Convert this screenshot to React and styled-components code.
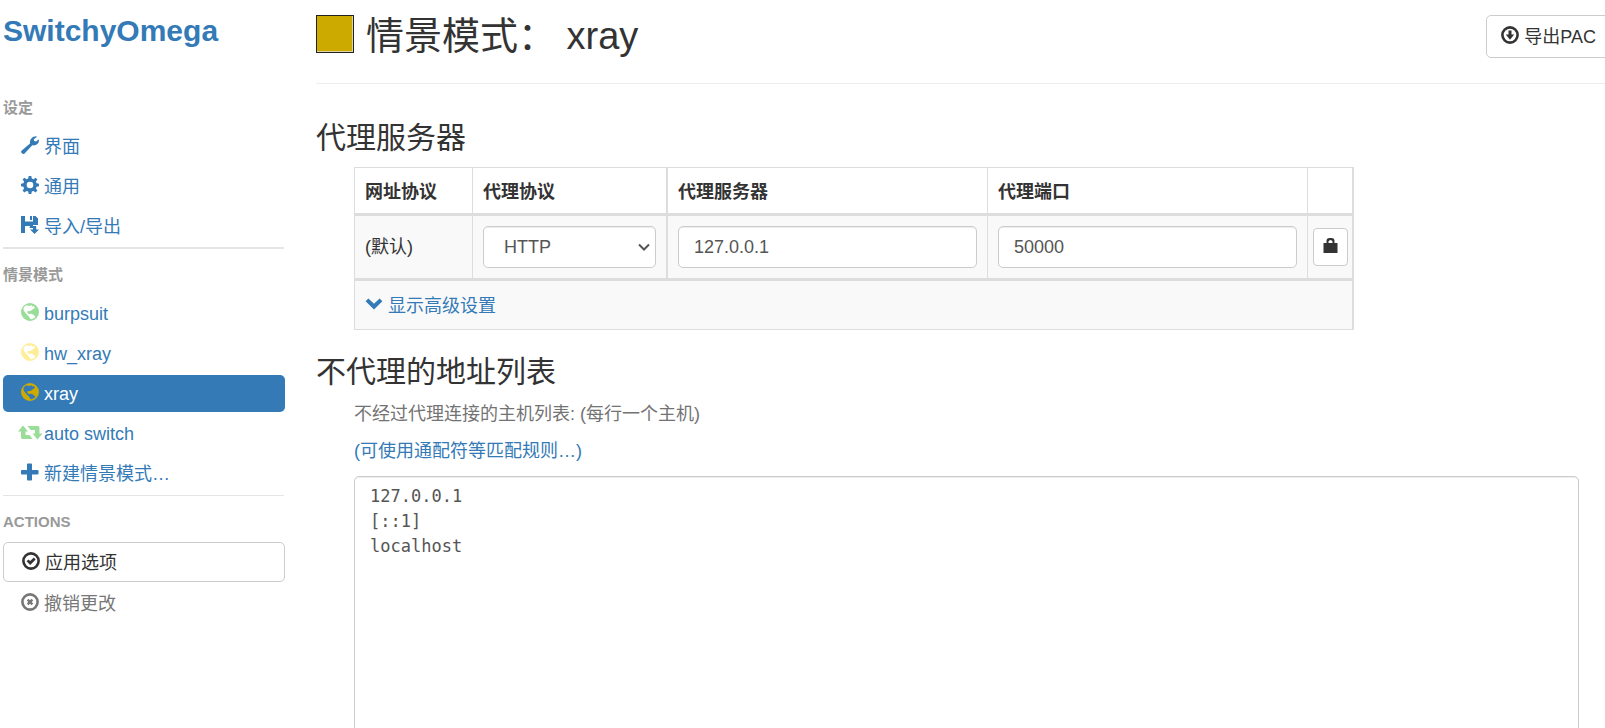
import React from "react";
import styled, { createGlobalStyle, css } from "styled-components";

const GlobalStyle = createGlobalStyle`
  *, *::before, *::after { box-sizing: border-box; }
  body {
    margin: 0;
    background: #fff;
    color: #333;
    font: 18px/25px "Liberation Sans", Arial, "Noto Sans CJK SC", sans-serif;
  }
  h1, h2, h3, p, ul { margin: 0; padding: 0; font-weight: 400; }
  ul { list-style: none; }
  a { color: #337ab7; text-decoration: none; }
  button, input, select, textarea { font: inherit; margin: 0; }
`;

const Shell = styled.div`
  display: grid;
  grid-template-columns: 282px minmax(0, 1fr);
  column-gap: 31px;
  height: 100vh;
  padding-left: 3px;
  overflow: hidden;
`;

const Sidebar = styled.nav`
  padding-top: 14px;
`;

const Brand = styled.h1`
  margin-bottom: 50px;
  font-size: 30px;
  line-height: 34px;
  a { font-weight: 700; }
`;

const NavHeading = styled.h3`
  margin-bottom: 10px;
  color: #999;
  font-size: 15px;
  font-weight: 700;
  line-height: 20px;
  text-transform: uppercase;
`;

const NavList = styled.ul`
  display: flex;
  flex-direction: column;
  gap: 3px;
`;

const navItem = css`
  display: flex;
  align-items: center;
  gap: 5px;
  width: 100%;
  padding: 7px 18px 5px;
  border-radius: 5px;
  line-height: 25px;
`;

const NavLink = styled.a`
  ${navItem}
  ${(p) => p.$active && css`background: #337ab7; color: #fff;`}
  ${(p) => p.$muted && css`color: #777;`}
`;

const ApplyButton = styled.button`
  ${navItem}
  border: 1px solid #ccc;
  background: #fff;
  color: #333;
  height: 40px;
`;

const Divider = styled.hr`
  margin: ${(p) => (p.$heavy ? 2 : 3)}px 1px 16px 0;
  border: 0;
  border-top: ${(p) => (p.$heavy ? 2 : 1)}px solid #e5e5e5;
`;

const Svg = styled.svg`
  flex: none;
  display: block;
  width: 18px;
  height: 18px;
  margin-bottom: 5px;
  overflow: visible;
  fill: ${(p) => p.$color || "currentColor"};
`;

const Main = styled.main`
  margin-right: -6px;
`;

const Header = styled.header`
  display: flex;
  align-items: flex-start;
  justify-content: space-between;
  height: 84px;
  padding-top: 15px;
  border-bottom: 1px solid #eee;
`;

const Title = styled.div`
  display: flex;
  align-items: flex-start;
  gap: 12px;
  h2 { font-size: 38px; line-height: 42px; white-space: pre; }
`;

const Swatch = styled.button`
  width: 38px;
  height: 38px;
  padding: 0;
  border: 1px solid #222;
  background: #ca0;
  box-shadow: inset -1px -1px #e0d4a0;
`;

const ExportButton = styled.button`
  display: flex;
  align-items: center;
  gap: 5px;
  height: 43px;
  padding: 2px 14px 0;
  border: 1px solid #ccc;
  border-radius: 5px;
  background: #fff;
  color: #333;
`;

const Section = styled.section`
  margin-top: ${(p) => (p.$first ? 37 : 25)}px;
`;

const SectionTitle = styled.h2`
  margin-bottom: 12px;
  font-size: 30px;
  line-height: 34px;
`;

const SectionBody = styled.div`
  padding: 0 32px 0 38px;
`;

const Table = styled.table`
  width: 100%;
  max-width: 1000px;
  table-layout: fixed;
  border: 1px solid #ddd;
  border-right-width: 2px;
  border-collapse: separate;
  border-spacing: 0;
  th, td {
    height: 48px;
    padding: 0 10px;
    border-right: 1px solid #ddd;
    text-align: left;
    vertical-align: middle;
  }
  th:nth-child(2), td:nth-child(2) { border-right-width: 2px; }
  th:last-child, td:last-child { border-right: 0; }
  th, tbody td { border-bottom: 3px solid #ddd; }
  th { padding-top: 3px; }
  tbody td { height: 65px; background: #f9f9f9; }
  tbody td:last-child { padding: 0 4px 0 5px; }
  tfoot td { padding-top: 2px; background: #f9f9f9; }
`;

const Col = styled.col`
  width: ${(p) => (p.$w ? `${p.$w}px` : "auto")};
`;

const field = css`
  display: block;
  width: 100%;
  border: 1px solid #ccc;
  border-radius: 5px;
  outline: 0;
  background: #fff;
  color: #555;
  box-shadow: inset 0 1px 1px rgba(0, 0, 0, 0.075);
`;

const TextInput = styled.input`
  ${field}
  height: 42px;
  padding: 0 15px;
`;

const SelectWrap = styled.div`
  display: grid;
  align-items: center;
  > * { grid-area: 1 / 1; }
  svg {
    justify-self: end;
    width: 12px;
    height: 8px;
    margin: 0 6px 0 0;
    fill: none;
    stroke: #555;
    stroke-width: 2;
    pointer-events: none;
  }
`;

const Select = styled.select`
  ${field}
  height: 42px;
  padding: 0 20px;
  appearance: none;
`;

const LockButton = styled.button`
  display: flex;
  align-items: center;
  justify-content: center;
  width: 35px;
  height: 38px;
  padding: 0;
  border: 1px solid #ccc;
  border-radius: 4px;
  background: #fff;
  color: #333;
`;

const AdvancedLink = styled.a`
  display: flex;
  align-items: center;
  gap: 5px;
`;

const Help = styled.p`
  margin-bottom: 12px;
  color: #737373;
`;

const Hints = styled.div`
  padding-top: 1px;
`;

const BypassList = styled.textarea`
  ${field}
  margin-top: 12px;
  padding: 7px 15px;
  font-family: "DejaVu Sans Mono", "Liberation Mono", monospace;
  font-size: 17px;
  line-height: 25px;
  resize: none;
`;

const Icon = ({ color, box = "0 0 18 18", children }) => (
  <Svg viewBox={box} $color={color} aria-hidden="true">{children}</Svg>
);

const WrenchIcon = () => (
  <Icon>
    <path d="M.5 14.800 9 7.500C8.500 3.500 11 .2 15.500.2L15.800 1 12.800 3.200 13.200 5 15 5.600 17.600 3.400 18 4C18 8 15 9.800 11.300 9.300L3.600 17.400C2 19-.9 16.400.5 14.800Z" />
  </Icon>
);

const CogIcon = () => (
  <Icon>
    <path
      fillRule="evenodd"
      d="M7.700 0h2.600l.5 2.500 1.700.7 2.100-1.500 1.800 1.800-1.500 2.100.7 1.700 2.400.4v2.600l-2.400.5-.7 1.700 1.500 2.100-1.800 1.800-2.100-1.500-1.700.7-.5 2.400H7.700l-.5-2.400-1.700-.7-2.100 1.500-1.800-1.800 1.500-2.100-.7-1.700L0 10.300V7.700l2.400-.4.7-1.700-1.500-2.100 1.800-1.800 2.100 1.500 1.700-.7ZM9 5.700a3.300 3.300 0 1 0 0 6.600 3.300 3.300 0 0 0 0-6.600Z"
    />
  </Icon>
);

const SaveIcon = () => (
  <Icon>
    <path d="M0 0h4v5.500h8V0h2.500L17 2.500V9h-5v3H8.500l.5-2H4v7H0ZM9 0h2v4H9ZM12 10h3.200v3.500H18L13.600 18 9 13.500h3Z" />
  </Icon>
);

const GlobeIcon = ({ color }) => (
  <Icon color={color}>
    <path
      fillRule="evenodd"
      d="M9 0a9 9 0 1 1 0 18A9 9 0 0 1 9 0ZM5.500 2.200 8 3 10.500 2.200 11.500 3.500 12.800 3 14 5 12 6 10.300 7.500 8.200 8.300 6.500 8 6.200 9.800 8 11 10.800 10.800 13 12.300 14.600 14 11.500 16 9.500 16.200 8.300 14 6.300 12 4.500 10 3 8 2.300 5.800 3.500 3.600Z"
    />
  </Icon>
);

const RetweetIcon = ({ color }) => (
  <Icon color={color}>
    <path d="M2 2.500 7 8.500H4.500V12H8.500L11.500 16H1.500Q0 16 0 14.500V8.500h-3ZM6.500 3H17Q18.500 3 18.500 4.500V10.500H21.500L16.500 16.500 11.500 10.500H14V7H9.800Z" />
  </Icon>
);

const PlusIcon = () => (
  <Icon>
    <path d="M6.800.5h3.400q.8 0 .8.8V7h5.700q.8 0 .8.8v2.900q0 .8-.8.8H11v5.200q0 .8-.8.8H6.800q-.8 0-.8-.8v-5.200H.8q-.8 0-.8-.8V7.800Q0 7 .8 7H6V1.300q0-.8.8-.8Z" />
  </Icon>
);

const Ring = ({ children }) => (
  <Icon>
    <circle cx="9" cy="9" r="7.600" fill="none" stroke="currentColor" strokeWidth="2.600" />
    {children}
  </Icon>
);

const OkIcon = () => (
  <Ring>
    <path d="m4.600 9.300 1.900-1.900 1.700 1.700 3.600-3.600 1.900 1.900-5.500 5.500Z" />
  </Ring>
);

const RemoveIcon = () => (
  <Ring>
    <path d="m7.400 5.800 1.600 1.500 1.600-1.500 1.600 1.600L10.700 9l1.500 1.600-1.600 1.600L9 10.700l-1.600 1.500-1.600-1.600L7.300 9 5.800 7.400Z" />
  </Ring>
);

const DownloadIcon = () => (
  <Ring>
    <path d="M7.500 4.500h3v4h2.700L9 13.800 4.800 8.500h2.700Z" />
  </Ring>
);

const LockIcon = () => (
  <Icon>
    <path fillRule="evenodd" d="M1.500 7h3V5A3 3 0 0 1 7.500 2h2A3 3 0 0 1 12.500 5v2H15.500v10H1.500ZM6.500 7h4V5.500Q10 4 8.500 4T6.500 5.500Z" />
  </Icon>
);

const ChevronIcon = () => (
  <Icon>
    <path d="M.6 6.200 3.400 3.400 9 8.800l5.600-5.400 2.800 2.800L9 14.600Z" />
  </Icon>
);

const settings = [
  { label: "界面", icon: <WrenchIcon /> },
  { label: "通用", icon: <CogIcon /> },
  { label: "导入/导出", icon: <SaveIcon /> },
];

const profiles = [
  { label: "burpsuit", icon: <GlobeIcon color="#99dd99" /> },
  { label: "hw_xray", icon: <GlobeIcon color="#ffee99" /> },
  { label: "xray", icon: <GlobeIcon color="#ccaa00" />, active: true },
  { label: "auto switch", icon: <RetweetIcon color="#99dd99" /> },
  { label: "新建情景模式…", icon: <PlusIcon /> },
];

const NavItems = ({ items }) => (
  <NavList>
    {items.map((item) => (
      <li key={item.label}>
        <NavLink href="#" $active={item.active} aria-current={item.active ? "page" : undefined}>
          {item.icon}
          <span>{item.label}</span>
        </NavLink>
      </li>
    ))}
  </NavList>
);

export default function App() {
  return (
    <>
      <GlobalStyle />
      <Shell>
        <Sidebar>
          <Brand><a href="#">SwitchyOmega</a></Brand>
          <NavHeading>设定</NavHeading>
          <NavItems items={settings} />
          <Divider $heavy />
          <NavHeading>情景模式</NavHeading>
          <NavItems items={profiles} />
          <Divider />
          <NavHeading>Actions</NavHeading>
          <NavList>
            <li><ApplyButton type="button"><OkIcon /><span>应用选项</span></ApplyButton></li>
            <li><NavLink href="#" $muted><RemoveIcon /><span>撤销更改</span></NavLink></li>
          </NavList>
        </Sidebar>

        <Main>
          <Header>
            <Title>
              <Swatch type="button" aria-label="颜色" />
              <h2>情景模式： xray</h2>
            </Title>
            <ExportButton type="button"><DownloadIcon /><span>导出PAC</span></ExportButton>
          </Header>

          <Section $first>
            <SectionTitle>代理服务器</SectionTitle>
            <SectionBody>
              <Table>
                <colgroup>
                  <Col $w={118} />
                  <Col $w={195} />
                  <Col />
                  <Col />
                  <Col $w={44} />
                </colgroup>
                <thead>
                  <tr>
                    <th scope="col">网址协议</th>
                    <th scope="col" id="scheme">代理协议</th>
                    <th scope="col" id="server">代理服务器</th>
                    <th scope="col" id="port">代理端口</th>
                    <th />
                  </tr>
                </thead>
                <tbody>
                  <tr>
                    <td>(默认)</td>
                    <td>
                      <SelectWrap>
                        <Select aria-labelledby="scheme" defaultValue="HTTP">
                          <option>HTTP</option>
                          <option>HTTPS</option>
                          <option>SOCKS4</option>
                          <option>SOCKS5</option>
                        </Select>
                        <svg viewBox="0 0 12 8" aria-hidden="true"><path d="m1 1.500 5 5 5-5" /></svg>
                      </SelectWrap>
                    </td>
                    <td><TextInput aria-labelledby="server" defaultValue="127.0.0.1" /></td>
                    <td><TextInput aria-labelledby="port" defaultValue="50000" /></td>
                    <td><LockButton type="button" aria-label="代理登录"><LockIcon /></LockButton></td>
                  </tr>
                </tbody>
                <tfoot>
                  <tr>
                    <td colSpan={5}>
                      <AdvancedLink href="#"><ChevronIcon /><span>显示高级设置</span></AdvancedLink>
                    </td>
                  </tr>
                </tfoot>
              </Table>
            </SectionBody>
          </Section>

          <Section>
            <SectionTitle id="bypass">不代理的地址列表</SectionTitle>
            <SectionBody>
              <Hints>
                <Help>不经过代理连接的主机列表: (每行一个主机)</Help>
                <p><a href="#">(可使用通配符等匹配规则…)</a></p>
              </Hints>
              <BypassList
                aria-labelledby="bypass"
                rows={14}
                spellCheck={false}
                defaultValue={"127.0.0.1\n[::1]\nlocalhost"}
              />
            </SectionBody>
          </Section>
        </Main>
      </Shell>
    </>
  );
}
